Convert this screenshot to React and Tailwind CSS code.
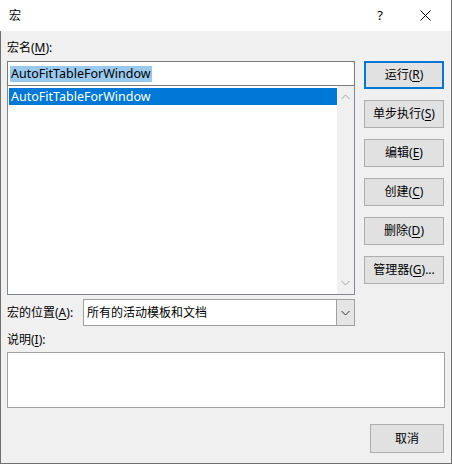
const font = { fontFamily: '"Noto Sans", "Noto Sans CJK SC", sans-serif' };

const Btn = ({ children, primary }) => (
    <div
        className={
            'h-[28px] w-[80px] flex items-center justify-center bg-[#e1e1e1] text-[12px] text-black ' +
            (primary ? 'border-2 border-[#0078d7]' : 'border border-[#adadad]')
        }
    >
        {children}
    </div>
);

const Chevron = ({ up, color }) => (
    <svg width="9" height="6" viewBox="0 0 9 6" fill="none">
        <path d={up ? 'M0.5 5L4.5 1L8.5 5' : 'M0.5 1L4.5 5L8.5 1'} stroke={color} strokeWidth="1" />
    </svg>
);

export default function App() {
    return (
        <div className="w-[452px] h-[464px] flex flex-col bg-white text-black" style={font}>
            {/* title bar */}
            <div className="h-[31px] flex items-center bg-white border-r border-[#707070]">
                <span className="pl-[9px] text-[12px]">宏</span>
                <span className="ml-auto text-[13px] mr-[37px]">?</span>
                <svg className="mr-[20px]" width="11" height="11" viewBox="0 0 11 11">
                    <path d="M0.5 0.5L10.5 10.5M10.5 0.5L0.5 10.5" stroke="#000" strokeWidth="1" />
                </svg>
            </div>

            {/* body */}
            <div className="flex-1 bg-[#f0f0f0] border-x border-b border-[#707070] pl-[6px] pr-[6px] flex flex-col text-[12px]">
                <div className="h-[14px] mt-[10px] leading-[14px]">
                    宏名(<u className="underline-offset-2">M</u>):
                </div>

                <div className="mt-[6px] flex gap-[9px]">
                    <div className="w-[348px] flex flex-col">
                        <div className="h-[25px] border border-[#7a7a7a] bg-white flex items-center pl-[2px]">
                            <span className="bg-[#99c9ef] px-[1px] leading-[16px] text-[12.5px]">AutoFitTableForWindow</span>
                        </div>
                        <div className="h-[209px] border border-[#828790] border-t-0 bg-white flex">
                            <div className="flex-1 pt-[2px] pl-[1px]">
                                <div className="h-[17px] bg-[#0078d7] text-white pl-[2px] leading-[17px] text-[12.5px]">
                                    AutoFitTableForWindow
                                </div>
                            </div>
                            <div className="w-[17px] bg-[#f0f0f0] flex flex-col items-center justify-between py-[8px]">
                                <Chevron up color="#a3a3a3" />
                                <Chevron color="#a3a3a3" />
                            </div>
                        </div>
                    </div>

                    <div className="flex flex-col gap-[11px]">
                        <Btn primary>
                            <span>运行(<u className="underline-offset-2">R</u>)</span>
                        </Btn>
                        <Btn>
                            <span>单步执行(<u className="underline-offset-2">S</u>)</span>
                        </Btn>
                        <Btn>
                            <span>编辑(<u className="underline-offset-2">E</u>)</span>
                        </Btn>
                        <Btn>
                            <span>创建(<u className="underline-offset-2">C</u>)</span>
                        </Btn>
                        <Btn>
                            <span>删除(<u className="underline-offset-2">D</u>)</span>
                        </Btn>
                        <Btn>
                            <span>管理器(<u className="underline-offset-2">G</u>)...</span>
                        </Btn>
                    </div>
                </div>

                <div className="mt-[4px] flex items-center">
                    <div className="w-[76px]">
                        宏的位置(<u className="underline-offset-2">A</u>):
                    </div>
                    <div className="w-[272px] h-[27px] border border-[#a0a0a0] bg-white flex">
                        <div className="flex-1 flex items-center pl-[3px]">所有的活动模板和文档</div>
                        <div className="w-[18px] bg-[#e5e5e5] border-l border-[#a0a0a0] flex items-center justify-center">
                            <Chevron color="#333" />
                        </div>
                    </div>
                </div>

                <div className="mt-[7px] h-[14px] leading-[14px]">
                    说明(<u className="underline-offset-2">I</u>):
                </div>

                <div className="mt-[5px] w-[438px] h-[56px] border border-[#a0a0a0] bg-white"></div>

                <div className="mt-[16px] flex justify-end pr-[1px]">
                    <div className="w-[74px] h-[29px] bg-[#e1e1e1] border border-[#adadad] flex items-center justify-center">
                        取消
                    </div>
                </div>
            </div>
        </div>
    );
}
